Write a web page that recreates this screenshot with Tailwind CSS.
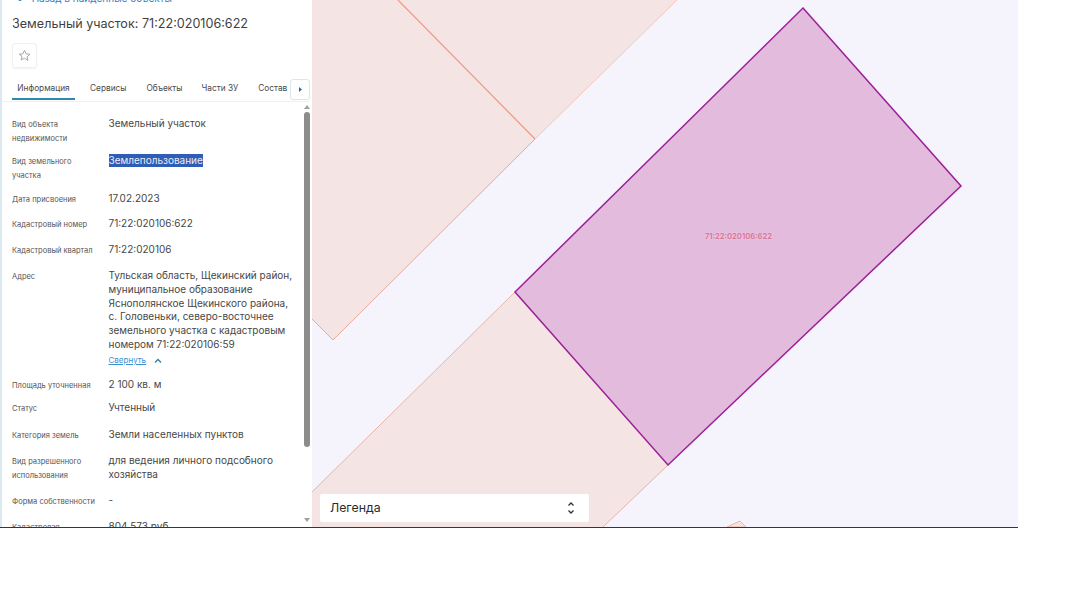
<!DOCTYPE html>
<html lang="ru">
<head>
<meta charset="utf-8">
<script src="https://cdn.jsdelivr.net/npm/@tailwindcss/browser@4"></script>
</head>
<body class="bg-white font-['Inter','Noto_Sans',sans-serif]">
<div class="w-[1018px] h-[528px] flex border-b border-[#3d3140] overflow-hidden">
  <aside class="w-[312px] h-[527px] shrink-0 bg-white border-l-2 border-[#dbe9f1] flex flex-col overflow-hidden text-[#454545]">
    <a class="h-[5px] pl-[15px] flex items-end gap-[9px] text-[10px] leading-[14px] text-[#2f7fc4] whitespace-nowrap"><span>•</span><span>Назад в найденные объекты</span></a>
    <h1 class="mt-[9px] pl-[10px] text-[12.6px] leading-[20px] font-normal text-[#3f3f3f] whitespace-nowrap">Земельный участок: 71:22:020106:622</h1>
    <button class="mt-[9px] ml-[10px] w-[25px] h-[25px] rounded-[3px] border border-[#f0f0f0] shadow-[0_1px_2px_rgba(0,0,0,0.05)] flex items-center justify-center">
      <svg width="13" height="13" viewBox="0 0 24 24" fill="none" stroke="#a5a5a5" stroke-width="1.8" stroke-linejoin="round"><path d="M12 2.500l2.900 6.400 7 .8-5.200 4.700 1.400 6.900L12 16.900l-6.100 3.400 1.400-6.900L2.100 9.700l7-.8z"/></svg>
    </button>
    <nav class="mt-[11px] h-[21px] mr-[2px] flex items-start border-b border-[#eef2f4] relative text-[8.3px] leading-[14px] text-[#4a4a4a] box-content pb-[1px]">
      <div class="ml-[10px] w-[63px] h-[21px] text-center border-b-2 border-[#2e87ad] pt-[2px]">Информация</div>
      <div class="ml-[15px] pt-[2px]">Сервисы</div>
      <div class="ml-[20px] pt-[2px]">Объекты</div>
      <div class="ml-[19px] pt-[2px]">Части ЗУ</div>
      <div class="ml-[20px] pt-[2px]">Состав</div>
      <button class="absolute right-0 top-0 w-[20px] h-[21px] rounded-[3px] border border-[#d8e6ef] bg-white flex items-center justify-center">
        <svg width="5" height="7" viewBox="0 0 5 7"><path d="M1 1l3 2.500-3 2.500z" fill="#2f6a96"/></svg>
      </button>
    </nav>
    <div class="flex-1 min-h-0 flex overflow-hidden">
      <dl class="w-[302px] pl-[10px] pt-[14px] shrink-0 text-[10px] leading-[14px] text-[#474747]">
        <div class="grid grid-cols-[96.5px_1fr] h-[37px]"><dt class="text-[7.5px] leading-[14px] pt-[2px] text-[#555]">Вид объекта<br>недвижимости</dt><dd>Земельный участок</dd></div>
        <div class="grid grid-cols-[96.5px_1fr] h-[38px]"><dt class="text-[7.5px] leading-[14px] pt-[2px] text-[#555]">Вид земельного<br>участка</dt><dd><span class="bg-[#2f5cb5] text-[#e8edf8] inline-block leading-[13px]">Землепользование</span></dd></div>
        <div class="grid grid-cols-[96.5px_1fr] h-[25px]"><dt class="text-[7.5px] leading-[14px] pt-[2px] text-[#555]">Дата присвоения</dt><dd>17.02.2023</dd></div>
        <div class="grid grid-cols-[96.5px_1fr] h-[26px]"><dt class="text-[7.5px] leading-[14px] pt-[2px] text-[#555]">Кадастровый номер</dt><dd>71:22:020106:622</dd></div>
        <div class="grid grid-cols-[96.5px_1fr] h-[26px]"><dt class="text-[7.5px] leading-[14px] pt-[2px] text-[#555]">Кадастровый квартал</dt><dd>71:22:020106</dd></div>
        <div class="grid grid-cols-[96.5px_1fr] h-[109px]"><dt class="text-[7.5px] leading-[14px] pt-[2px] text-[#555]">Адрес</dt><dd class="pt-[1px] leading-[13.8px] whitespace-nowrap">Тульская область, Щекинский район,<br>муниципальное образование<br>Яснополянское Щекинского района,<br>с. Головеньки, северо-восточнее<br>земельного участка с кадастровым<br>номером 71:22:020106:59<div class="flex items-center gap-[8px] mt-[2px] text-[8px] text-[#3a8fd0]"><span class="underline">Свернуть</span><svg width="8" height="6" viewBox="0 0 8 6" fill="none" stroke="#2f7fa8" stroke-width="1.300"><path d="M1 4.500L4 1.500l3 3"/></svg></div></dd></div>
        <div class="grid grid-cols-[96.5px_1fr] h-[23px]"><dt class="text-[7.5px] leading-[14px] pt-[2px] text-[#555]">Площадь уточненная</dt><dd>2 100 кв. м</dd></div>
        <div class="grid grid-cols-[96.5px_1fr] h-[27px]"><dt class="text-[7.5px] leading-[14px] pt-[2px] text-[#555]">Статус</dt><dd>Учтенный</dd></div>
        <div class="grid grid-cols-[96.5px_1fr] h-[26px]"><dt class="text-[7.5px] leading-[14px] pt-[2px] text-[#555]">Категория земель</dt><dd>Земли населенных пунктов</dd></div>
        <div class="grid grid-cols-[96.5px_1fr] h-[40px]"><dt class="text-[7.5px] leading-[14px] pt-[2px] text-[#555]">Вид разрешенного<br>использования</dt><dd>для ведения личного подсобного<br>хозяйства</dd></div>
        <div class="grid grid-cols-[96.5px_1fr] h-[26px]"><dt class="text-[7.5px] leading-[14px] pt-[2px] text-[#555]">Форма собственности</dt><dd>-</dd></div>
        <div class="grid grid-cols-[96.5px_1fr] h-[26px]"><dt class="text-[7.5px] leading-[14px] pt-[2px] text-[#555]">Кадастровая</dt><dd>804 573 руб.</dd></div>
      </dl>
      <div class="w-[6px] flex flex-col items-center">
        <svg class="mt-[3px]" width="6" height="4" viewBox="0 0 6 4"><path d="M3 0l3 4H0z" fill="#a0a0a0"/></svg>
        <div class="mt-[3px] w-[6px] h-[335px] rounded-[3px] bg-[#8c8c8c]"></div>
        <svg class="mt-[71px]" width="6" height="4" viewBox="0 0 6 4"><path d="M3 4L0 0h6z" fill="#a0a0a0"/></svg>
      </div>
    </div>
  </aside>
  <main class="relative flex-1 h-[527px] bg-[#f5f3fb] overflow-hidden">
    <svg class="absolute inset-0" width="706" height="527" viewBox="312 0 706 527">
      <path d="M398 0L535 139L677 0Z" fill="#f5e4e4"/>
      <path d="M312 0H398L535 139L333 340L312 319Z" fill="#f5e4e4"/>
      <path d="M398 0L535 139" fill="none" stroke="#ec9a84" stroke-width="1.200"/>
      <path d="M535 139L333 340L312 319" fill="none" stroke="#eba897" stroke-width="1"/>
      <path d="M535 139L677 0" fill="none" stroke="#f0c8bc" stroke-width="1"/>
      <path d="M515 292L668 465L603 527H312V492Z" fill="#f5e4e4"/>
      <path d="M312 492L515 292M668 465L603 527" fill="none" stroke="#e8b5a6" stroke-width="1"/>
      <path d="M727 527L740 521L746 527Z" fill="#f5e4e4" stroke="#e8b5a6" stroke-width="1"/>
      <path d="M803 8L961 186L668 465L515 292Z" fill="#e3bbdd" stroke="#9a1f98" stroke-width="1.500"/>
    </svg>
    <span class="absolute left-[393px] top-[232px] text-[7.5px] leading-[10px] font-bold text-[#d9789a] whitespace-nowrap [text-shadow:0_0_2px_#f5d5e0]">71:22:020106:622</span>
    <div class="absolute left-[8px] bottom-[5px] w-[269px] h-[28px] rounded-[2px] bg-white flex items-center justify-between pl-[10px] pr-[14px] text-[12.3px] text-[#2b2b2b]">
      <span>Легенда</span>
      <svg width="8" height="14" viewBox="0 0 8 14" fill="none" stroke="#333" stroke-width="1.300"><path d="M1.500 4.500L4 2l2.500 2.500M1.500 9.500L4 12l2.500-2.500"/></svg>
    </div>
  </main>
</div>
</body>
</html>
